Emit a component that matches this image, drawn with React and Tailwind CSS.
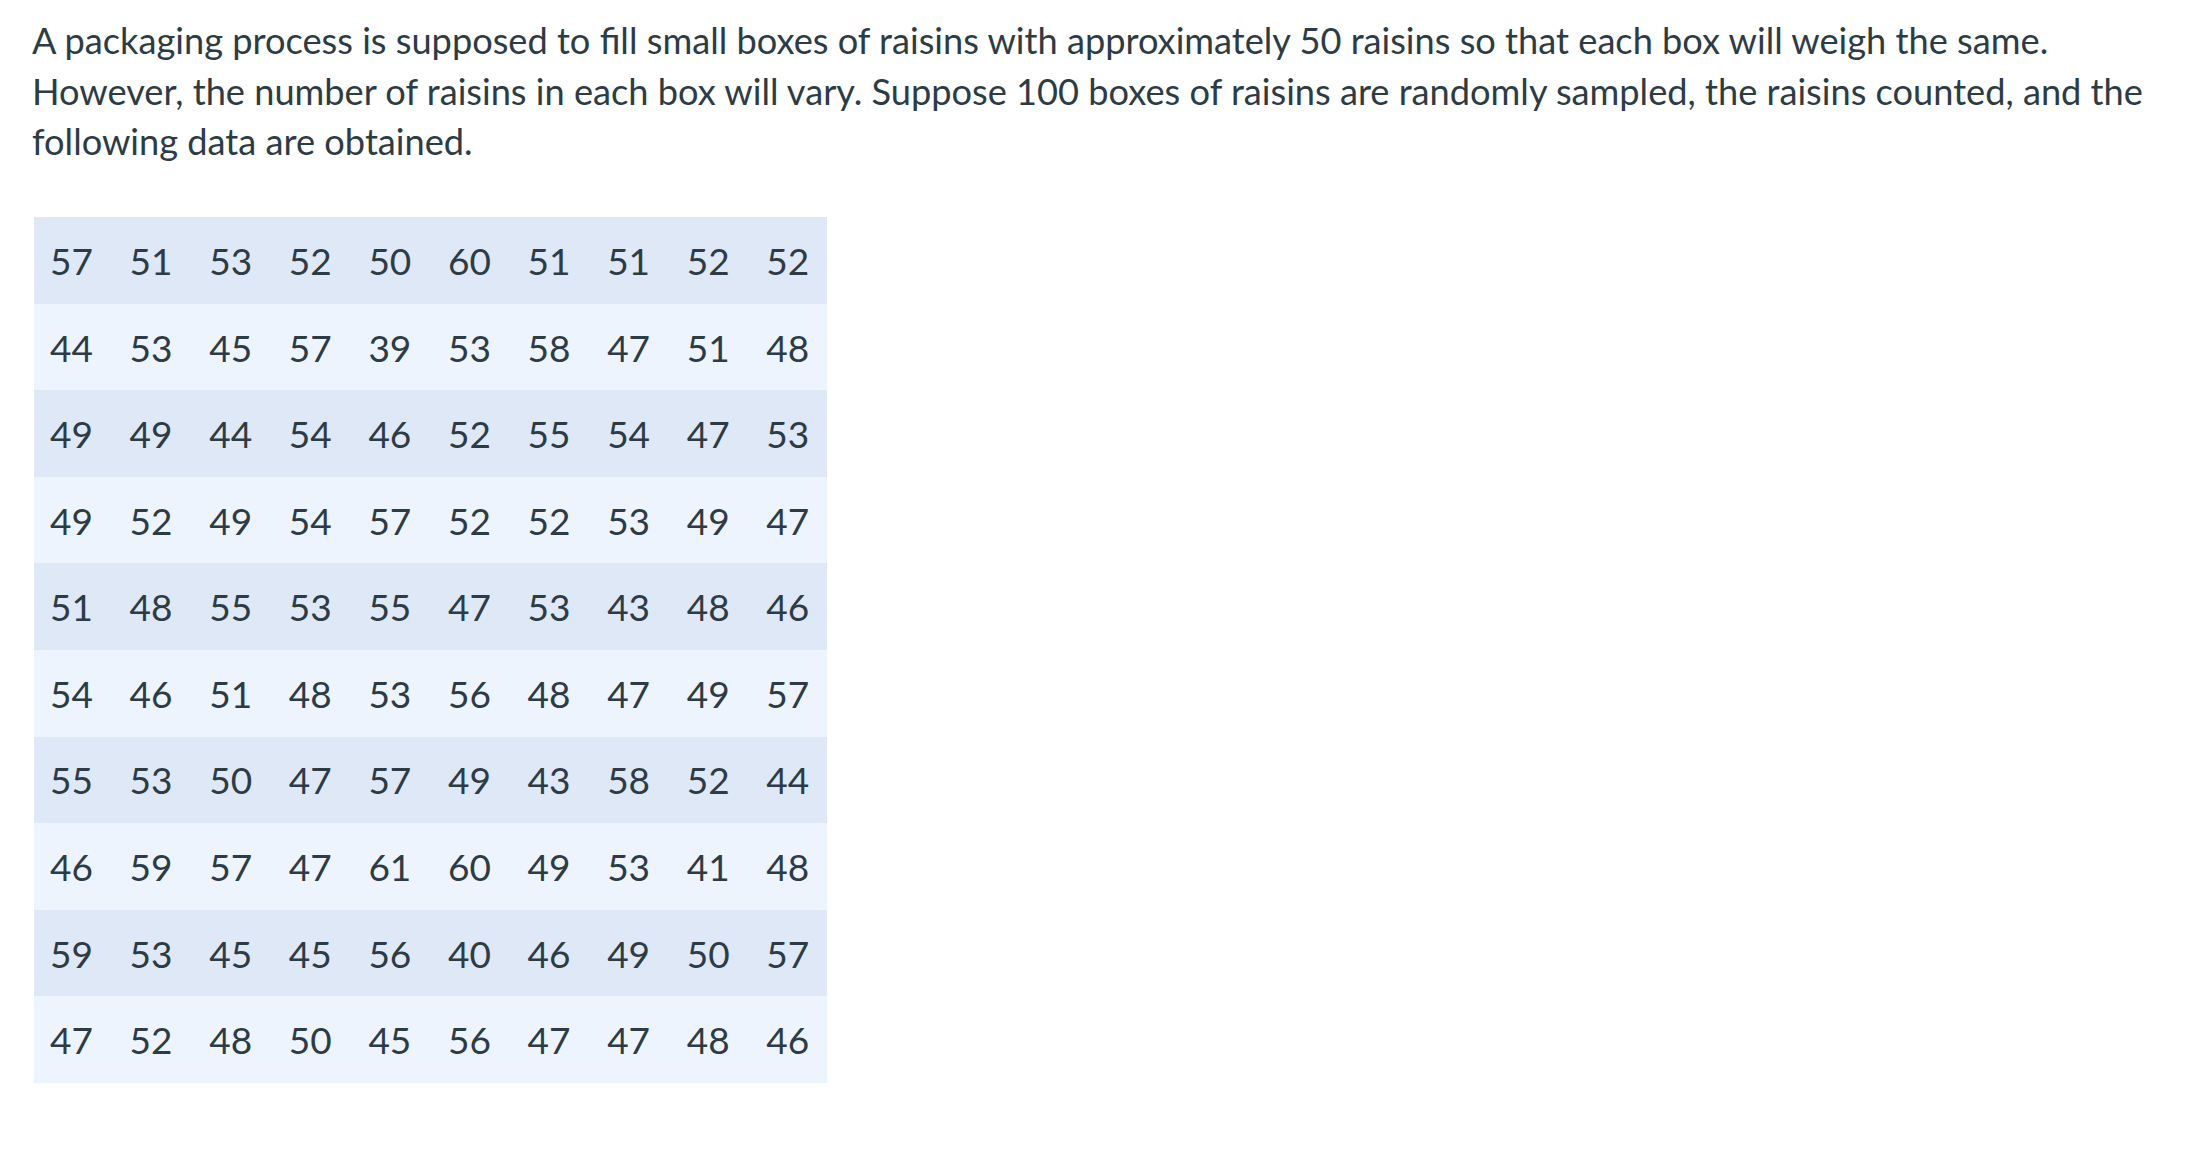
import React from 'react';

const rows = [
    [57, 51, 53, 52, 50, 60, 51, 51, 52, 52],
    [44, 53, 45, 57, 39, 53, 58, 47, 51, 48],
    [49, 49, 44, 54, 46, 52, 55, 54, 47, 53],
    [49, 52, 49, 54, 57, 52, 52, 53, 49, 47],
    [51, 48, 55, 53, 55, 47, 53, 43, 48, 46],
    [54, 46, 51, 48, 53, 56, 48, 47, 49, 57],
    [55, 53, 50, 47, 57, 49, 43, 58, 52, 44],
    [46, 59, 57, 47, 61, 60, 49, 53, 41, 48],
    [59, 53, 45, 45, 56, 40, 46, 49, 50, 57],
    [47, 52, 48, 50, 45, 56, 47, 47, 48, 46],
];

const App = () => {
    return (
        <div className="min-h-screen bg-white text-[#2d3b45] pt-[15px] pl-[32px] pr-[20px] font-['Lato',sans-serif]">
            <p className="text-[36.2px] leading-[50.7px] m-0">
                A packaging process is supposed to fill small boxes of raisins with approximately 50 raisins so that each box will weigh the same.
                However, the number of raisins in each box will vary. Suppose 100 boxes of raisins are randomly sampled, the raisins counted, and the
                following data are obtained.
            </p>

            <div className="mt-[50px] ml-[2px] w-[793px]">
                {rows.map((row, i) => (
                    <div
                        key={i}
                        className={`grid grid-cols-[repeat(10,79.6px)] h-[86.6px] items-center overflow-hidden ${i % 2 === 0 ? 'bg-[#dfe8f6]' : 'bg-[#edf4fe]'}`}
                    >
                        {row.map((n, j) => (
                            <div key={j} className="pl-[16px] text-[37px] leading-none">
                                {n}
                            </div>
                        ))}
                    </div>
                ))}
            </div>
        </div>
    );
};

export default App;
